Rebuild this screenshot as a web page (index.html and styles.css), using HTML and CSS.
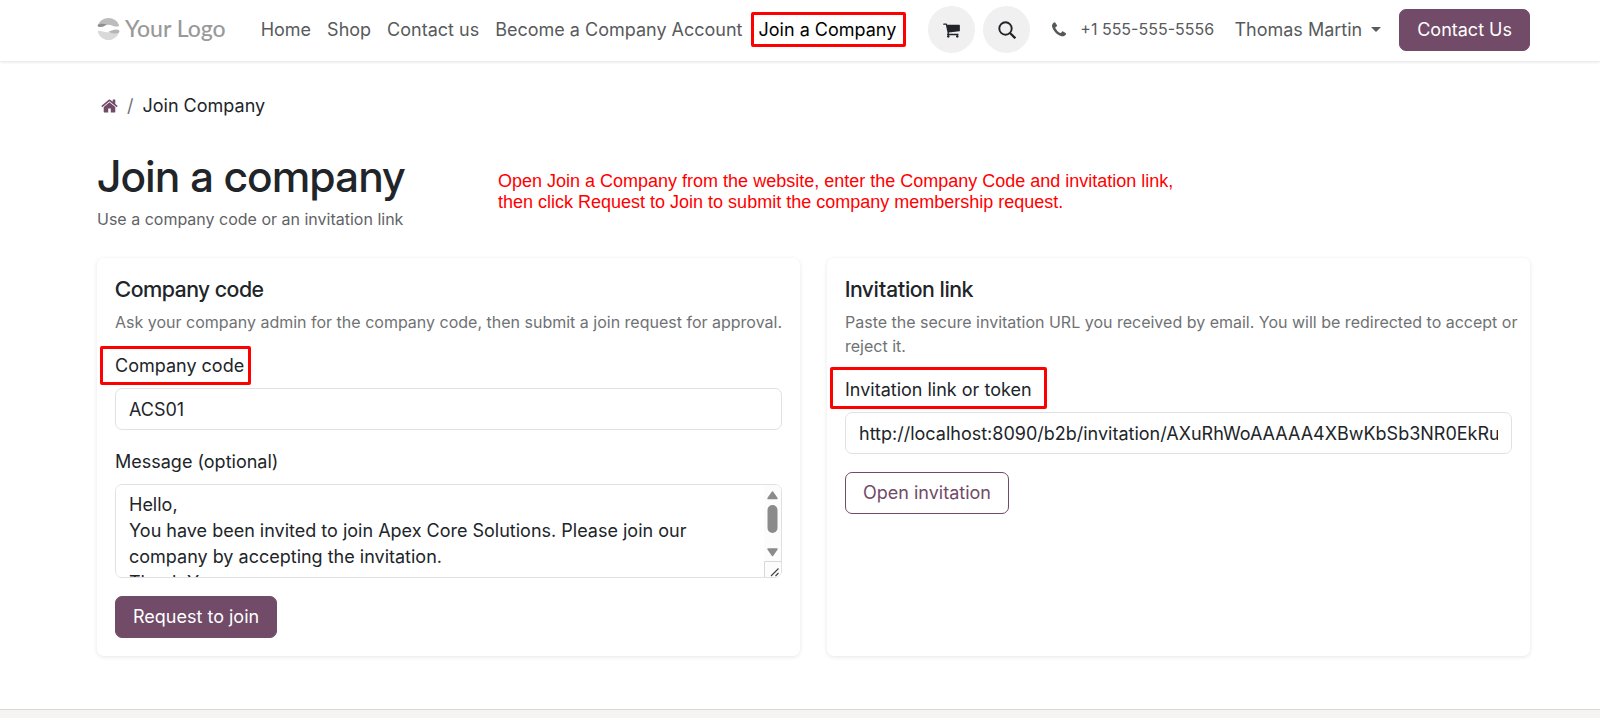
FILE: index.html
```html
<!DOCTYPE html>
<html lang="en">
<head>
<meta charset="utf-8">
<meta name="viewport" content="width=device-width, initial-scale=1">
<title>Join Company</title>
<link rel="stylesheet" href="styles.css">
</head>
<body>
<header class="site-header">
  <div class="container header-bar">
    <a class="logo" href="#">
      <svg class="logo-mark" viewBox="0 0 24 24" aria-hidden="true">
        <path d="M1 8.500C2.500 4 7 1 12 1s9.500 3 11 7.500c.2.700-.8 1.500-2 1.500-4 0-6-2.200-9.500-2-3 .2-4 1.800-7.500 2.200C2 10.400.6 10 1 8.500z" fill="#bcbcbc"/>
        <path d="M.8 8.200C3 6.800 6 6.500 10.500 8 8 8.600 6.500 10.500 3 10.500 1 10.500.3 9.500.8 8.200z" fill="#8f8f8f"/>
        <path d="M.7 14.500c3.300-.8 5.800 1.500 9.800 1.500s7-2.500 12.800-1.500C22.500 19.500 17.800 24 12 24S1.500 19.500.7 14.500z" fill="#d9d9d9"/>
        <path d="M12 15.500c3-1 5-2.500 8-2.500 2.500 0 3.600.8 3.300 2.500-.1.600-.5 1-1 1.200-3.800 1-6.800.5-10.300-1.200z" fill="#b5b5b5"/>
      </svg>
      <span>Your Logo</span>
    </a>
    <nav class="main-nav">
      <a href="#">Home</a>
      <a href="#">Shop</a>
      <a href="#">Contact us</a>
      <a href="#">Become a Company Account</a>
      <a class="active" href="#">Join a Company<span class="mark mark-nav"></span></a>
    </nav>
    <div class="tools">
      <a class="round" href="#" aria-label="Cart">
        <svg width="17" height="18" viewBox="0 0 1664 1792" fill="#212529"><path d="M640 1536q0 52-38 90t-90 38-90-38-38-90 38-90 90-38 90 38 38 90zm896 0q0 52-38 90t-90 38-90-38-38-90 38-90 90-38 90 38 38 90zm128-1088v512q0 24-16.500 42.500t-40.500 21.500l-1044 122q13 60 13 70 0 16-24 64h920q26 0 45 19t19 45-19 45-45 19h-1024q-26 0-45-19t-19-45q0-11 8-31.500t16-36 21.500-40 15.500-29.500l-177-823h-204q-26 0-45-19t-19-45 19-45 45-19h256q16 0 28.500 6.500t19.500 15.500 13 24.500 8 26 5.500 29.500 4.500 26h1201q26 0 45 19t19 45z"/></svg>
      </a>
      <button class="round" type="button" aria-label="Search">
        <svg width="18" height="18" viewBox="0 0 18 18" fill="none" stroke="#212529"><circle cx="7.500" cy="7.500" r="6.200" stroke-width="1.900"/><path d="M12 12l5.300 5.300" stroke-width="2.300"/></svg>
      </button>
    </div>
    <a class="phone" href="tel:+15555555556">
      <svg width="14" height="18" viewBox="0 0 1408 1792" fill="#55585b"><path d="M1408 1240q0 27-10 70.500t-21 68.500q-21 50-122 106-94 51-186 51-27 0-53-3.500t-57.500-12.500-47-14.500-55.500-20.500-49-18q-98-35-175-83-127-79-264-216t-216-264q-48-77-83-175-3-9-18-49t-20.500-55.500-14.500-47-12.500-57.500-3.500-53q0-92 51-186 56-101 106-122 25-11 68.500-21t70.500-10q14 0 21 3 18 6 53 76 11 19 30 54t35 63.500 31 53.500q3 4 17.500 25t21.500 35.500 7 28.500q0 20-28.500 50t-62 55-62 53-28.500 46q0 9 5 22.500t8.500 20.500 14 24 11.500 19q76 137 174 235t235 174q2 1 19 11.500t24 14 20.500 8.500 22.500 5q18 0 46-28.500t53-62 55-62 50-28.500q14 0 28.500 7t35.500 21.500 25 17.500q25 15 53.500 31t63.500 35 54 30q70 35 76 53 3 7 3 21z"/></svg>
      <span>+1 555-555-5556</span>
    </a>
    <button class="user" type="button">Thomas Martin<span class="caret"></span></button>
    <a class="btn btn-primary" href="#">Contact Us</a>
  </div>
</header>

<main class="container page">
  <nav class="breadcrumb" aria-label="Breadcrumb">
    <a href="#" aria-label="Home"><svg width="17" height="18" viewBox="0 0 1664 1792" fill="#714b67"><path d="M1408 992v480q0 26-19 45t-45 19h-384v-384h-256v384h-384q-26 0-45-19t-19-45v-480q0-1 .5-3t.5-3l575-474 575 474q1 2 1 6zm223-69l-62 74q-8 9-21 11h-3q-13 0-21-7l-692-577-692 577q-12 8-24 7-13-2-21-11l-62-74q-8-10-7-23.500t11-21.500l719-599q32-26 76-26t76 26l244 204v-195q0-14 9-23t23-9h192q14 0 23 9t9 23v408l219 182q10 8 11 21.500t-7 23.500z"/></svg></a>
    <span class="slash">/</span>
    <span>Join Company</span>
  </nav>

  <div class="heading">
    <h1>Join a company</h1>
    <p>Use a company code or an invitation link</p>
    <p class="note">Open Join a Company from the website, enter the Company Code and invitation link,<br>then click Request to Join to submit the company membership request.</p>
  </div>

  <div class="cards">
    <form class="card">
      <h2>Company code</h2>
      <p>Ask your company admin for the company code, then submit a join request for approval.</p>
      <label for="code">Company code<span class="mark mark-code"></span></label>
      <input id="code" type="text" value="ACS01">
      <label for="message">Message (optional)</label>
      <div class="area">
        <textarea id="message">Hello,
You have been invited to join Apex Core Solutions. Please join our company by accepting the invitation.
Thank You,</textarea>
        <svg class="scrollbar" width="17" height="92" viewBox="0 0 17 92" aria-hidden="true">
          <path d="M0 0h11q6 0 6 6v80q0 6-6 6H0z" fill="#fcfcfc"/>
          <path d="M8.500 7L13 13.500H4z M8.500 70.500L4 64h9z" fill="#8b8b8b" stroke="#8b8b8b" stroke-width="1.500" stroke-linejoin="round"/>
          <rect x="3.500" y="20" width="10" height="28" rx="5" fill="#8b8b8b"/>
          <path d="M.5 92V76.500H17" fill="none" stroke="#d8d8d8"/>
          <path d="M7 91l7.500-7.500M11.500 91l3-3" fill="none" stroke="#444" stroke-width="1.200"/>
        </svg>
      </div>
      <button class="btn btn-primary" type="button">Request to join</button>
    </form>
    <form class="card">
      <h2>Invitation link</h2>
      <p class="wide">Paste the secure invitation URL you received by email. You will be redirected to accept or<br>reject it.</p>
      <label for="link">Invitation link or token<span class="mark mark-link"></span></label>
      <input id="link" type="text" value="http://localhost:8090/b2b/invitation/AXuRhWoAAAAA4XBwKbSb3NR0EkRucQ7d">
      <button class="btn btn-outline" type="button">Open invitation</button>
    </form>
  </div>
</main>
<footer class="site-footer"></footer>
</body>
</html>
```
FILE: styles.css
```css
* { box-sizing: border-box; }

body {
  margin: 0;
  min-height: 100vh;
  display: flex;
  flex-direction: column;
  background: #fff;
  color: #212529;
  font: 18px/27px Inter, "Liberation Sans", sans-serif;
}

h1, h2, p { margin: 0; }
a { color: inherit; text-decoration: none; }
svg { display: block; }

.container {
  width: 100%;
  padding: 0 70px 0 97px;
}

/* Header */
.site-header {
  background: #fff;
  box-shadow: 0 1px 3px rgba(0, 0, 0, .12);
}

.header-bar {
  display: flex;
  align-items: center;
  height: 61px;
  padding-bottom: 2px;
  color: #585a5c;
  white-space: nowrap;
}

.logo {
  display: flex;
  align-items: center;
  gap: 5px;
  margin-right: 35px;
  padding-bottom: 3px;
  color: #999;
  font: 500 23px/28px Lato, sans-serif;
}

.logo-mark { width: 23px; height: 23px; }

.main-nav { display: flex; gap: 16px; }
.main-nav .active { position: relative; color: #000; }

.tools { display: flex; gap: 8px; margin-left: 32px; }

.round {
  display: grid;
  place-items: center;
  width: 47px;
  height: 47px;
  padding: 0;
  border: 0;
  border-radius: 50%;
  background: #f0f0f0;
}

.phone {
  display: flex;
  align-items: center;
  gap: 14px;
  margin-left: 22px;
  font-size: 16px;
}

.user {
  display: flex;
  align-items: center;
  gap: 9px;
  margin-left: auto;
  margin-right: 18px;
  padding: 0;
  border: 0;
  background: none;
  color: inherit;
  font: inherit;
}

.caret {
  border: 5px solid transparent;
  border-top-color: currentColor;
  border-bottom: 0;
}

.btn {
  padding: 7px 17px;
  border: 1px solid #714b67;
  border-radius: 7px;
  font: inherit;
  line-height: 26px;
}

.btn-primary { background: #714b67; color: #fff; }
.btn-outline { background: #fff; color: #714b67; }

/* Page */
.page { padding-top: 31px; padding-bottom: 53px; }

.breadcrumb {
  display: flex;
  align-items: center;
  gap: 9px;
  margin-bottom: 30px;
  padding-left: 4px;
}

.slash { color: #6c757d; }

.heading { position: relative; margin-bottom: 27px; }

h1 {
  margin-bottom: 4px;
  font-family: "Inter Display", Inter, sans-serif;
  font-size: 44px;
  font-weight: 500;
  line-height: 54px;
}

.heading p {
  color: #5f6366;
  font-size: 16px;
  line-height: 24px;
}

.heading .note {
  position: absolute;
  top: 22px;
  left: 401px;
  color: #f00;
  font: 18px/21px "Liberation Sans", Arial, sans-serif;
}

/* Cards */
.cards {
  display: grid;
  grid-template-columns: minmax(0, 1fr) minmax(0, 1fr);
  gap: 27px;
}

.card {
  display: flex;
  flex-direction: column;
  align-items: flex-start;
  padding: 18px;
  border-radius: 7px;
  background: #fff;
  box-shadow: 0 1px 4px rgba(0, 0, 0, .1);
}

h2 {
  margin-bottom: 8px;
  font-family: "Inter Display", Inter, sans-serif;
  font-size: 22px;
  font-weight: 500;
  line-height: 26px;
}

.card p {
  margin-bottom: 18px;
  color: #6f7274;
  font-size: 16px;
  line-height: 24px;
}

.card .wide { white-space: nowrap; }

.card label { position: relative; margin-bottom: 9px; }

.card input,
.card textarea {
  display: block;
  width: 100%;
  height: 42px;
  margin: 0;
  padding: 6px 13px;
  border: 1px solid #dee2e6;
  border-radius: 7px;
  background: #fff;
  color: inherit;
  font: inherit;
}

.card input { margin-bottom: 18px; }

.area {
  position: relative;
  width: 100%;
  margin-bottom: 18px;
}

.card textarea {
  height: 94px;
  padding-top: 7px;
  padding-right: 30px;
  line-height: 26px;
  resize: none;
}

.scrollbar {
  position: absolute;
  top: 1px;
  right: 1px;
}

/* Red callout frames */
.mark {
  position: absolute;
  border: 3px solid #f00;
  border-radius: 2px;
  pointer-events: none;
}

.mark-nav { inset: -4px -10px -4px -8px; }
.mark-code { inset: -6px -7px -6px -15px; }
.mark-link { inset: -9px -15px -6px -15px; }

.site-footer {
  flex: 1;
  min-height: 8px;
  border-top: 1px solid #d8d8d8;
  background: #f5f4f3;
}
```
